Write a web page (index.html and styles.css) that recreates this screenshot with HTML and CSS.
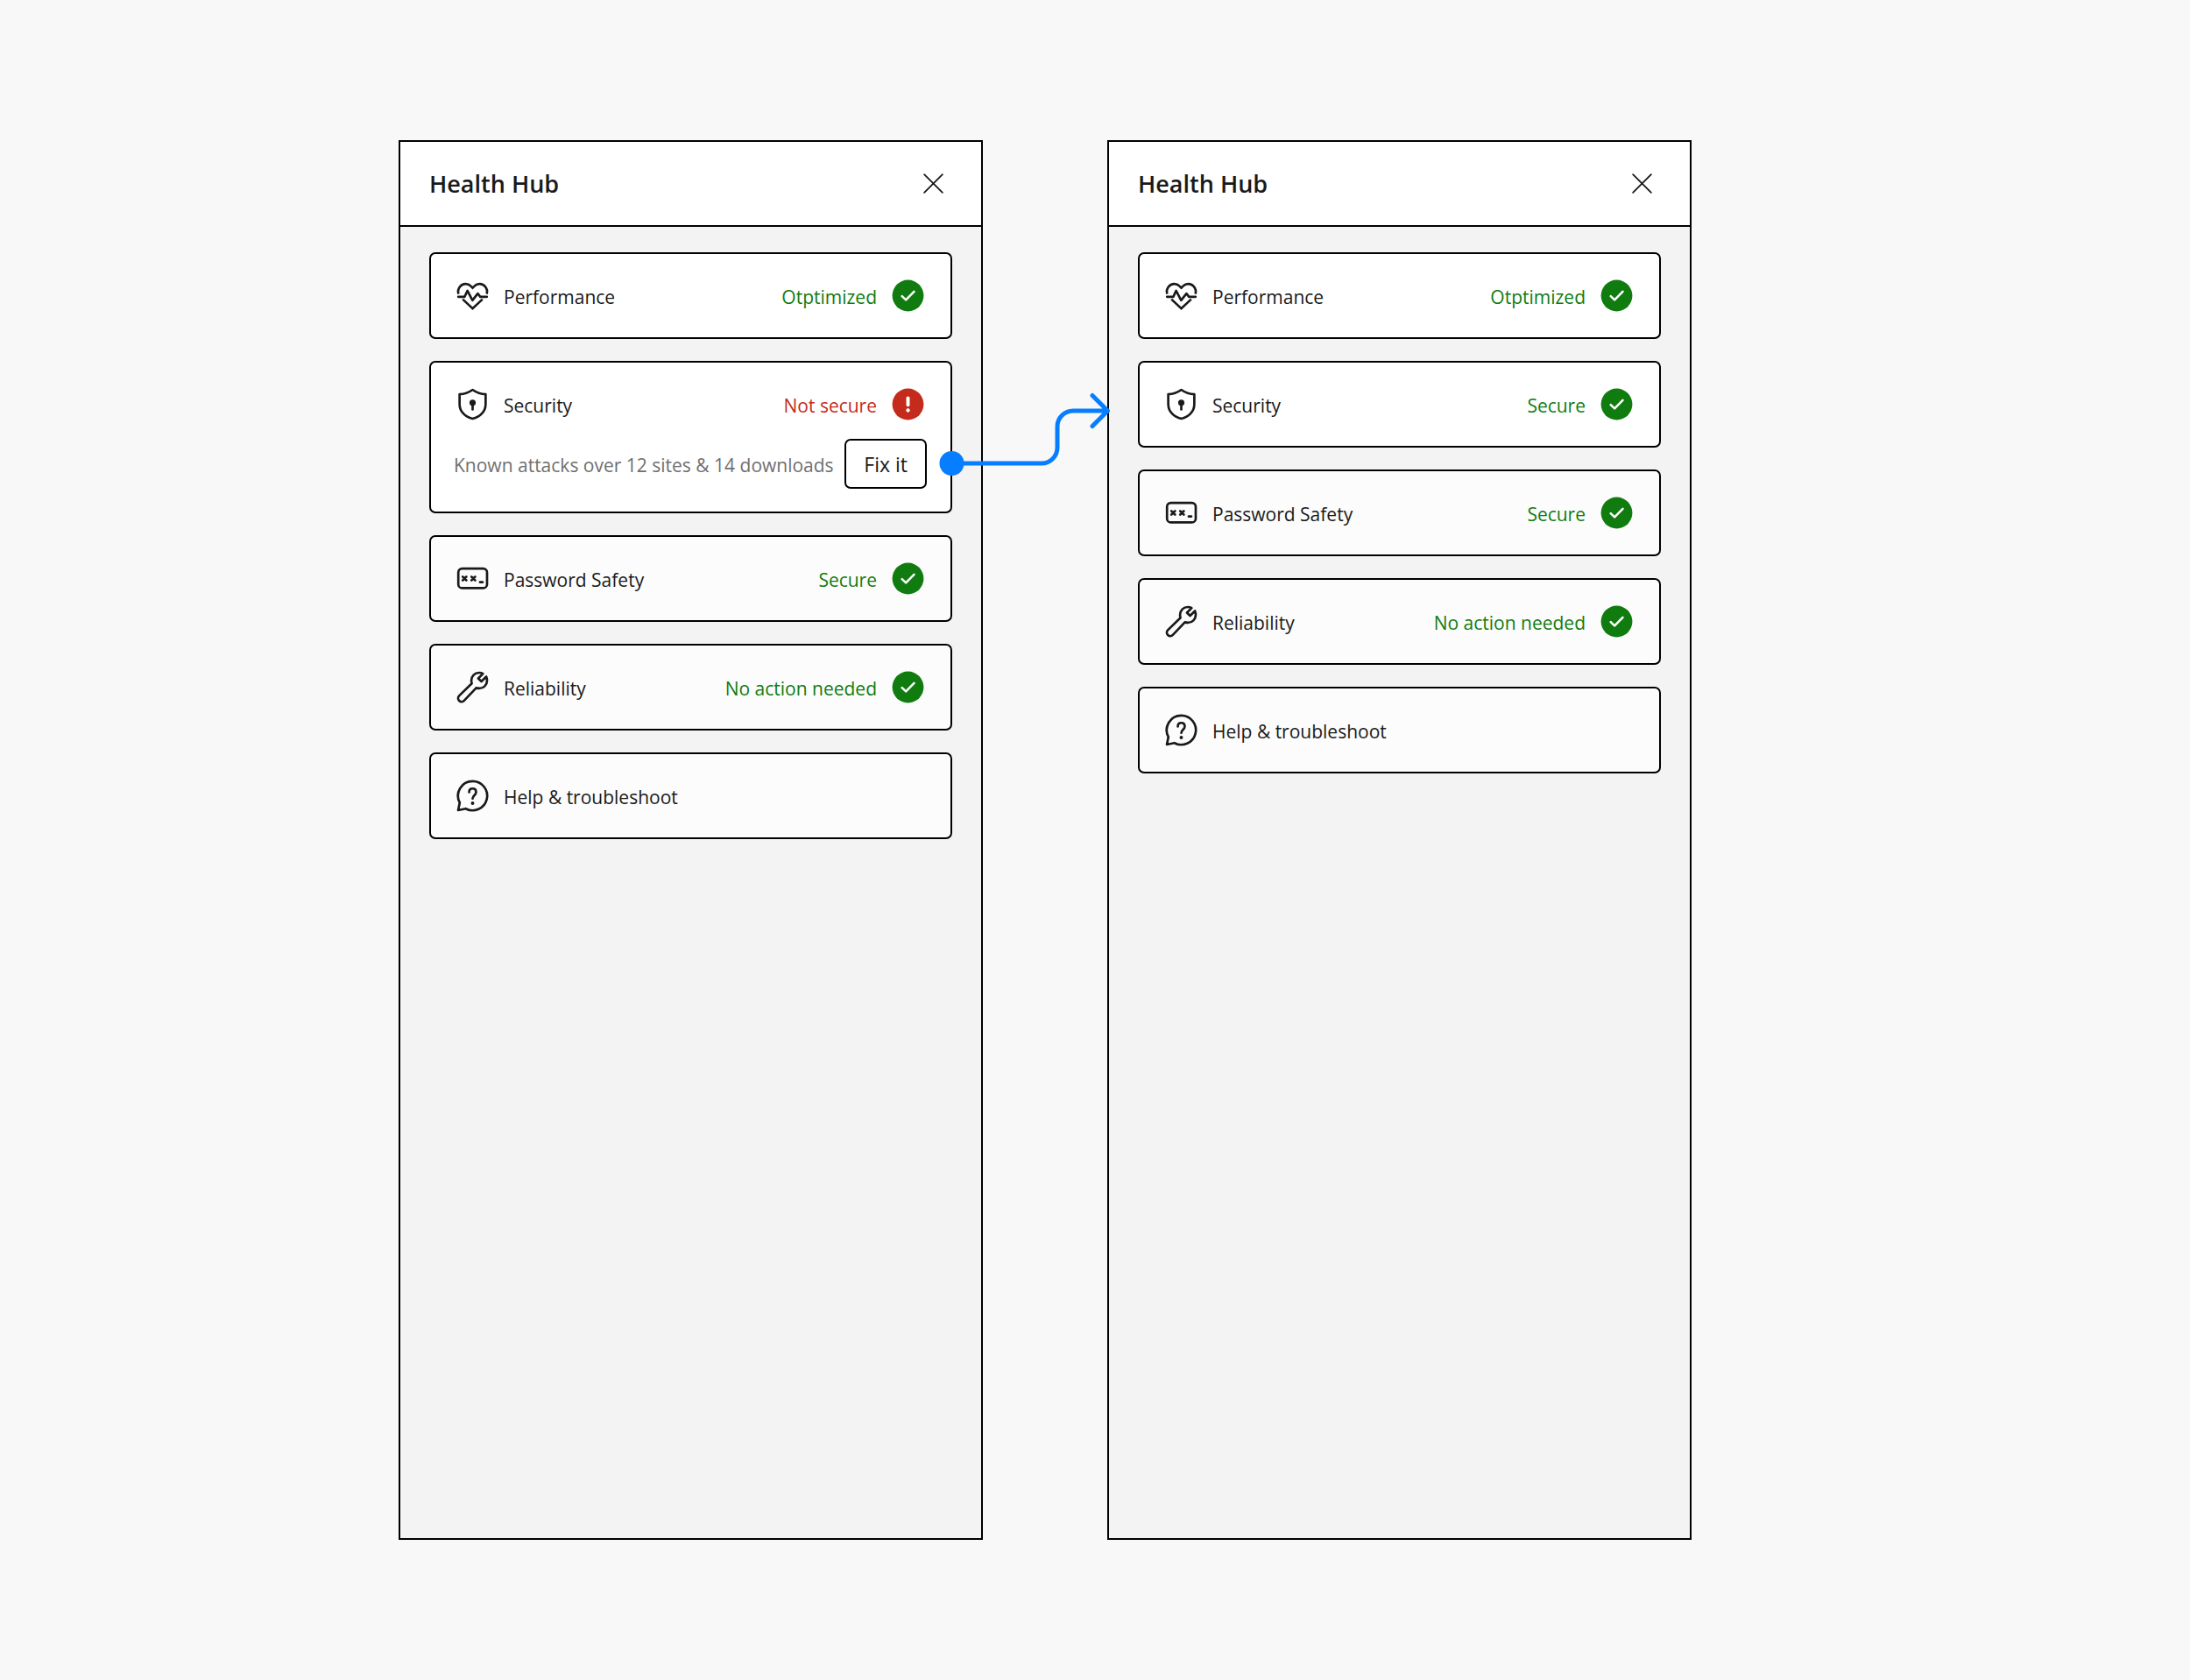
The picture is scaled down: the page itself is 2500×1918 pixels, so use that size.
FILE: index.html
```html
<!DOCTYPE html>
<html lang="en">
<head>
<meta charset="utf-8">
<meta name="viewport" content="width=device-width, initial-scale=1">
<title>Health Hub</title>
<link rel="stylesheet" href="styles.css">
</head>
<body>
<svg class="sprite" aria-hidden="true">
  <symbol id="i-close" viewBox="0 0 24 24"><path class="line thin" d="M6.2 6.2 17.8 17.8M17.8 6.2 6.2 17.8"/></symbol>
  <symbol id="i-heart" viewBox="0 0 24 24">
    <path class="line flat" d="M3 11C2.5 9.300 2.800 7.600 4 6.200 5.800 4 9 4 10.700 5.800L12 7.100 13.300 5.800C15 4 18.200 4 20 6.200 21.200 7.600 21.500 9.300 21 11"/>
    <path class="line" d="M2.900 12.750H6.900L8.700 8.900 11.900 15 15.300 10.700 16.900 12.750H21.100"/>
    <path class="line flat" d="M5.700 14.300 12 20.200 18.300 14.300"/>
  </symbol>
  <symbol id="i-shield" viewBox="0 0 24 24">
    <path class="line" d="M12 2.800C9.500 4.600 6.500 5.600 3.700 5.600V11.800C3.700 16.500 7 20 12 21.200 17 20 20.300 16.500 20.300 11.800V5.600C17.500 5.600 14.500 4.600 12 2.800Z"/>
    <circle class="fill" cx="12" cy="11" r="2"/>
    <path class="line" d="M12 12V15.300"/>
  </symbol>
  <symbol id="i-password" viewBox="0 0 24 24">
    <rect class="line" x="2.900" y="5.700" width="18.300" height="12.400" rx="2.400"/>
    <path class="line" d="M5.700 10.900 8 13.100M8 10.900 5.700 13.100M11.300 10.900 13.600 13.100M13.600 10.900 11.300 13.100M16.700 14.300H18.400"/>
  </symbol>
  <symbol id="i-wrench" viewBox="0 0 24 24">
    <path class="line" d="M16.200 2.800C13.300 2.800 11.200 5 11.200 7.800 11.200 8.500 11.300 9 11.500 9.600L3.400 17.500A2.200 2.200 0 0 0 6.600 20.600L14.300 12.500C14.900 12.700 15.600 12.800 16.200 12.800 19 12.800 21.200 10.600 21.200 7.800 21.200 6.900 21 6.100 20.700 5.300L17.600 8.400 15.600 6.400 18.600 3.400C17.900 3 17 2.800 16.200 2.800Z"/>
  </symbol>
  <symbol id="i-help" viewBox="0 0 24 24">
    <path class="line" d="M12 2.700A9.300 9.300 0 1 1 7.600 20.200L2.800 21.200 3.800 16.400A9.300 9.300 0 0 1 12 2.700Z"/>
    <path class="line" d="M9.800 9.700C9.800 8.200 10.800 7.400 12 7.400S14.200 8.200 14.200 9.700C14.200 11.500 12 11.900 12 13.800"/>
    <circle class="fill" cx="12" cy="16.700" r="1.100"/>
  </symbol>
  <symbol id="i-ok" viewBox="0 0 24 24">
    <circle class="fill" cx="12" cy="12" r="10"/>
    <path class="mark" d="M8.200 12.300 10.700 14.700 15.900 9.400"/>
  </symbol>
  <symbol id="i-alert" viewBox="0 0 24 24">
    <circle class="fill" cx="12" cy="12" r="10"/>
    <path class="mark thick" d="M12 8.100V12.400"/>
    <circle class="dot" cx="12" cy="15.900" r="1.200"/>
  </symbol>
</svg>

<main class="board">
  <section class="panel" aria-labelledby="hub-before">
    <header class="panel-head">
      <h2 class="title" id="hub-before">Health Hub</h2>
      <button class="close" type="button" aria-label="Close"><svg class="icon"><use href="#i-close"/></svg></button>
    </header>
    <ul class="cards">
      <li class="card card-bright">
        <div class="row">
          <svg class="icon"><use href="#i-heart"/></svg><span class="name">Performance</span>
          <span class="status ok">Otptimized</span><svg class="icon ok"><use href="#i-ok"/></svg>
        </div>
      </li>
      <li class="card card-bright">
        <div class="row">
          <svg class="icon"><use href="#i-shield"/></svg><span class="name">Security</span>
          <span class="status alert">Not secure</span><svg class="icon alert"><use href="#i-alert"/></svg>
        </div>
        <div class="detail">
          <p class="note">Known attacks over 12 sites &amp; 14 downloads</p>
          <button class="fix" type="button">Fix it</button>
        </div>
        <svg class="connector" viewBox="0 0 210 110" aria-hidden="true">
          <circle cx="20.500" cy="87" r="14"/>
          <path d="M20 87H123A18 18 0 0 0 141 69V45A18 18 0 0 1 159 27H198M181 9.500 198.500 27 181 44.500"/>
        </svg>
      </li>
      <li class="card">
        <div class="row">
          <svg class="icon"><use href="#i-password"/></svg><span class="name">Password Safety</span>
          <span class="status ok">Secure</span><svg class="icon ok"><use href="#i-ok"/></svg>
        </div>
      </li>
      <li class="card">
        <div class="row">
          <svg class="icon"><use href="#i-wrench"/></svg><span class="name">Reliability</span>
          <span class="status ok">No action needed</span><svg class="icon ok"><use href="#i-ok"/></svg>
        </div>
      </li>
      <li class="card">
        <div class="row">
          <svg class="icon"><use href="#i-help"/></svg><span class="name">Help &amp; troubleshoot</span>
        </div>
      </li>
    </ul>
  </section>

  <section class="panel" aria-labelledby="hub-after">
    <header class="panel-head">
      <h2 class="title" id="hub-after">Health Hub</h2>
      <button class="close" type="button" aria-label="Close"><svg class="icon"><use href="#i-close"/></svg></button>
    </header>
    <ul class="cards">
      <li class="card card-bright">
        <div class="row">
          <svg class="icon"><use href="#i-heart"/></svg><span class="name">Performance</span>
          <span class="status ok">Otptimized</span><svg class="icon ok"><use href="#i-ok"/></svg>
        </div>
      </li>
      <li class="card card-bright">
        <div class="row">
          <svg class="icon"><use href="#i-shield"/></svg><span class="name">Security</span>
          <span class="status ok">Secure</span><svg class="icon ok"><use href="#i-ok"/></svg>
        </div>
      </li>
      <li class="card">
        <div class="row">
          <svg class="icon"><use href="#i-password"/></svg><span class="name">Password Safety</span>
          <span class="status ok">Secure</span><svg class="icon ok"><use href="#i-ok"/></svg>
        </div>
      </li>
      <li class="card">
        <div class="row">
          <svg class="icon"><use href="#i-wrench"/></svg><span class="name">Reliability</span>
          <span class="status ok">No action needed</span><svg class="icon ok"><use href="#i-ok"/></svg>
        </div>
      </li>
      <li class="card">
        <div class="row">
          <svg class="icon"><use href="#i-help"/></svg><span class="name">Help &amp; troubleshoot</span>
        </div>
      </li>
    </ul>
  </section>
</main>
</body>
</html>
```
FILE: styles.css
```css
* {
  box-sizing: border-box;
}

body {
  margin: 0;
  background: #f8f8f8;
  color: #1a1a1a;
  font: 21px/28px "Open Sans", "Noto Sans", sans-serif;
}

.sprite {
  display: none;
}

.board {
  display: grid;
  grid-template-columns: 1fr 1fr;
  gap: 142px;
  min-height: 100vh;
  padding: 160px 22.76% 160px 18.2%;
}

.panel {
  display: flex;
  flex-direction: column;
  border: 2px solid #000;
  background: #f3f3f3;
}

.panel-head {
  display: flex;
  align-items: center;
  justify-content: space-between;
  padding: 26px 33px;
  border-bottom: 2px solid #000;
  background: #fff;
}

.title {
  margin: 0;
  font-size: 27px;
  font-weight: 600;
  line-height: 43px;
}

.close {
  display: flex;
  padding: 0;
  border: 0;
  background: none;
  color: inherit;
}

.cards {
  display: flex;
  flex-direction: column;
  gap: 25px;
  margin: 0;
  padding: 29px 33px;
  list-style: none;
}

.card {
  position: relative;
  display: flex;
  flex-direction: column;
  gap: 18px;
  padding: 26px 27px 26px 26px;
  border: 2px solid #000;
  border-radius: 7px;
  background: #fcfcfc;
}

.card-bright {
  background: #fff;
}

.row {
  display: flex;
  align-items: center;
  gap: 14px;
}

.name {
  flex: 1;
}

.name,
.status,
.note {
  padding-top: 2px;
}

.icon {
  flex: none;
  width: 43px;
  height: 43px;
}

.ok {
  color: #107c10;
}

.alert {
  color: #c42b1c;
}

.detail {
  display: flex;
  align-items: center;
  justify-content: space-between;
}

.note {
  margin: 0;
  color: #707070;
}

.fix {
  padding: 13px 20px 11px;
  border: 2px solid #000;
  border-radius: 7px;
  background: #fff;
  color: #1a1a1a;
  font-family: inherit;
  font-size: 23px;
  line-height: 29px;
}

.line {
  fill: none;
  stroke: currentColor;
  stroke-width: 1.5;
  stroke-linecap: round;
  stroke-linejoin: round;
}

.thin {
  stroke-width: 1;
}

.flat {
  stroke-linecap: butt;
  stroke-linejoin: miter;
}

.fill {
  fill: currentColor;
}

.mark {
  fill: none;
  stroke: #fff;
  stroke-width: 1.4;
  stroke-linecap: round;
  stroke-linejoin: round;
}

.thick {
  stroke-width: 2.2;
}

.dot {
  fill: #fff;
}

/* Arrow from the Fix it action to the next panel */
.connector {
  position: absolute;
  top: 28px;
  right: -191px;
  z-index: 1;
  width: 210px;
  height: 110px;
  fill: #077eff;
  pointer-events: none;
}

.connector path {
  fill: none;
  stroke: #077eff;
  stroke-width: 5;
  stroke-linecap: round;
  stroke-linejoin: round;
}
```
